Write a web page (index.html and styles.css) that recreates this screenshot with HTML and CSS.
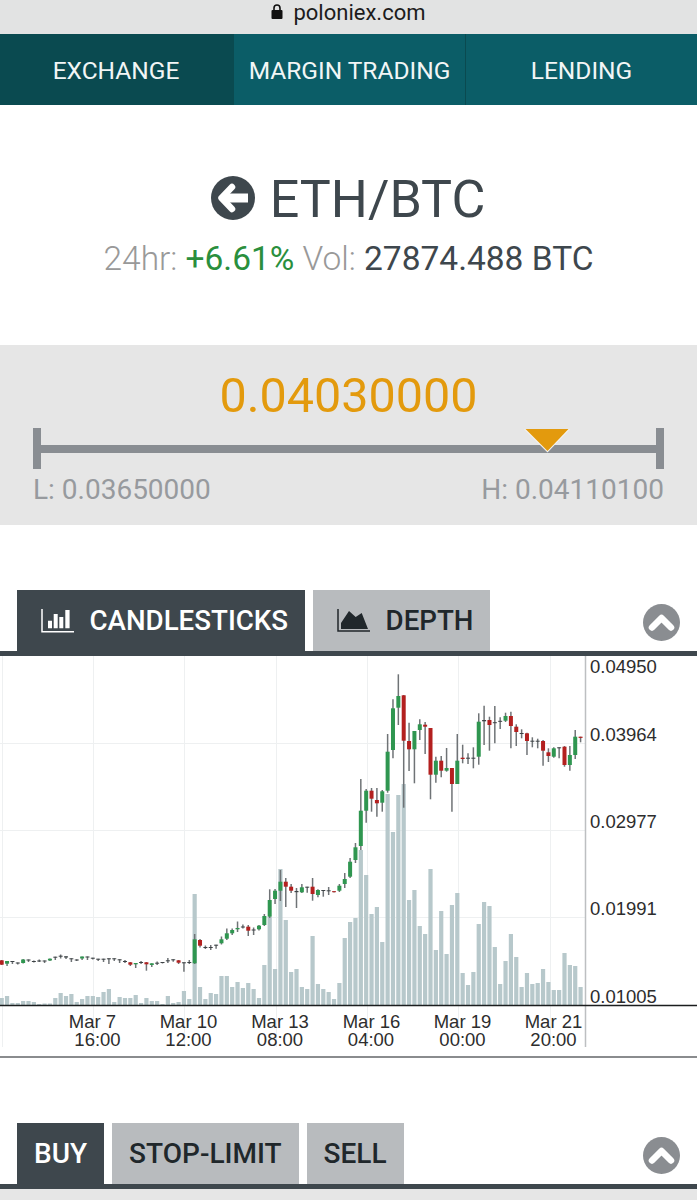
FILE: index.html
```html
<!DOCTYPE html>
<html lang="en">
<head>
<meta charset="utf-8">
<title>ETH/BTC - Poloniex</title>
<link rel="stylesheet" href="styles.css">
</head>
<body>
<div class="urlbar">
  <svg class="lock" viewBox="0 0 12 15" width="12" height="15"><path d="M3 6V4a3 3 0 0 1 6 0v2" fill="none" stroke="#111" stroke-width="1.6"/><rect x="0.5" y="6" width="11" height="9" rx="1" fill="#111"/></svg>
  <span class="url">poloniex.com</span>
</div>
<nav class="nav">
  <a class="nav-item nav-active">EXCHANGE</a>
  <a class="nav-item nav-mid">MARGIN TRADING</a>
  <a class="nav-item">LENDING</a>
</nav>
<header class="pair">
  <div class="pair-title">
    <svg class="back" viewBox="0 0 44 44" width="44" height="44"><circle cx="22" cy="22" r="22" fill="#3e474d"/><path d="M21 11 10.500 22 21 33" fill="none" stroke="#fff" stroke-width="6.500" stroke-linejoin="round" stroke-linecap="round"/><path d="M14 22H37" stroke="#fff" stroke-width="9"/></svg>
    <h1 class="pair-name">ETH/BTC</h1>
  </div>
  <p class="pair-stats"><span class="muted">24hr:</span> <span class="up">+6.61%</span> <span class="muted">Vol:</span> <span class="dark">27874.488 BTC</span></p>
</header>
<section class="range">
  <div class="price">0.04030000</div>
  <div class="slider">
    <i class="cap"></i><i class="track"></i><i class="cap"></i>
    <svg class="marker" viewBox="0 0 46 25" width="46" height="25"><path d="M0 1H46L23.500 24.500Z" fill="#f4f4f4"/><path d="M1.500 1H44.500L23.500 23Z" fill="#e39a0d"/></svg>
  </div>
  <div class="limits"><span>L: 0.03650000</span><span>H: 0.04110100</span></div>
</section>
<section class="panel chart-panel">
  <div class="tabs">
    <div class="tab tab-on">
      <svg class="tab-icon" viewBox="0 0 33 25" width="33" height="25"><path d="M1 1V23.700H33" fill="none" stroke="#fff" stroke-width="1.500"/><path d="M7 12.700h4v7.600H7zM12.700 6h4v14.300h-4zM18.300 9h4v11.300h-4zM24.300 2h4.300v18.300h-4.300z" fill="#fff"/></svg>
      CANDLESTICKS
    </div>
    <div class="tab">
      <svg class="tab-icon" viewBox="0 0 33 25" width="33" height="25"><path d="M1 1V23H33" fill="none" stroke="#20272b" stroke-width="1.500"/><path d="M4 21V15L12 3 18.700 9 24.700 5 31 21Z" fill="#20272b"/></svg>
      DEPTH
    </div>
    <svg class="collapse" viewBox="0 0 37 37" width="37" height="37"><circle cx="18.500" cy="18.500" r="18.500" fill="#8a8d91"/><path d="M9 23.500 18.500 14 28 23.500" fill="none" stroke="#fff" stroke-width="6.500" stroke-linejoin="round" stroke-linecap="round"/></svg>
  </div>
  <div class="rule"></div>
  <svg id="chart" class="chart" viewBox="0 656 697 400" width="697" height="400">
    <g id="grid"></g>
    <g id="bars"></g>
    <g id="candles"></g>
    <path class="axis" d="M585.500 656V1047"/>
    <path class="base" d="M0 1005.500H697"/>
    <g class="labels">
      <text x="590" y="673">0.04950</text>
      <text x="590" y="741">0.03964</text>
      <text x="590" y="828">0.02977</text>
      <text x="590" y="915">0.01991</text>
      <text x="590" y="1003">0.01005</text>
    </g>
    <g class="labels mid">
      <text x="92.500" y="1028">Mar 7</text><text x="97.500" y="1046">16:00</text>
      <text x="188.500" y="1028">Mar 10</text><text x="188.500" y="1046">12:00</text>
      <text x="280" y="1028">Mar 13</text><text x="280" y="1046">08:00</text>
      <text x="371.500" y="1028">Mar 16</text><text x="371" y="1046">04:00</text>
      <text x="462.500" y="1028">Mar 19</text><text x="462.500" y="1046">00:00</text>
      <text x="553.500" y="1028">Mar 21</text><text x="553.500" y="1046">20:00</text>
    </g>
  </svg>
</section>
<section class="panel order-panel">
  <div class="tabs tabs-order">
    <div class="tab tab-on">BUY</div>
    <div class="tab">STOP-LIMIT</div>
    <div class="tab">SELL</div>
    <svg class="collapse" viewBox="0 0 37 37" width="37" height="37"><circle cx="18.500" cy="18.500" r="18.500" fill="#8a8d91"/><path d="M9 23.500 18.500 14 28 23.500" fill="none" stroke="#fff" stroke-width="6.500" stroke-linejoin="round" stroke-linecap="round"/></svg>
  </div>
  <div class="rule"></div>
  <div class="order-body"></div>
</section>
<script src="chart.js"></script>
</body>
</html>
```
FILE: styles.css
```css
* { box-sizing: border-box; }
html, body { margin: 0; padding: 0; background: #fff; }
body { width: 697px; height: 1200px; overflow: hidden; font-family: Roboto, "Liberation Sans", sans-serif; color: #3e474d; }

.urlbar { height: 34px; background: #e2e3e3; display: flex; justify-content: center; align-items: flex-start; gap: 10px; }
.lock { margin-top: 4px; }
.url { font-family: Roboto, sans-serif; font-size: 22px; line-height: 26px; color: #1c1c1c; }

.nav { height: 71px; display: grid; grid-template-columns: 234px 232px 231px; background: #0b5d67; }
.nav-item { display: flex; align-items: center; justify-content: center; color: #f2f6f6; font-size: 24.500px; font-weight: 400; padding-top: 1px; }
.nav-active { background: #0a4a50; padding-right: 2px; }
.nav-mid { border-right: 1px solid #0a4a50; }

.pair { height: 240px; padding-top: 71px; text-align: center; }
.pair-title { display: flex; justify-content: center; align-items: center; gap: 15px; height: 44px; padding-right: 1px; }
.pair-name { margin: 0; font-size: 52px; font-weight: 400; line-height: 44px; color: #3e474d; position: relative; top: 2px; }
.pair-stats { margin: 19px 0 0; font-size: 33.500px; font-weight: 300; line-height: 40px; }
.muted { color: #999; }
.up { color: #2a8f3d; font-weight: 400; }
.dark { color: #3e474d; font-weight: 400; }

.range { height: 180px; background: #e6e6e6; padding: 24px 33px 0; }
.price { font-size: 48.500px; font-weight: 400; line-height: 54px; color: #e39a0d; text-align: center; }
.slider { position: relative; display: flex; align-items: center; height: 41px; margin: 5px 0 0; }
.cap { width: 8px; height: 41px; background: #898d92; }
.track { flex: 1; height: 8px; background: #898d92; }
.marker { position: absolute; left: 491px; top: 0; }
.limits { display: flex; justify-content: space-between; margin-top: 3px; font-size: 28px; font-weight: 400; line-height: 36px; color: #979a9e; }

.chart-panel { padding-top: 65px; height: 533px; }
.tabs { position: relative; display: flex; gap: 8px; height: 61px; padding-left: 17px; }
.tab { display: flex; align-items: center; gap: 15.500px; height: 61px; padding: 0 17px; background: #b8bbbe; color: #20272b; font-size: 27.700px; font-weight: 500; }
.tab-on { background: #3e474d; color: #fff; }
.tab-icon { margin-left: 7px; }
.collapse { position: absolute; right: 17px; top: 14px; }
.rule { height: 5px; background: #3e474d; }

.chart { display: block; }
.chart-panel { border-bottom: 2px solid #8a8c8e; }
.gridline { stroke: #eef0f1; stroke-width: 1; }
.bar { fill: #b7c8cb; }
.wick { stroke: #6f7376; stroke-width: 1.500; }
.body-g { fill: #2f9650; }
.body-r { fill: #b3201f; }
.body-n { fill: #3d4245; }
.axis { stroke: #bdbfc1; stroke-width: 1.500; fill: none; }
.base { stroke: #1b1d1e; stroke-width: 1.500; fill: none; }
.labels text { font-family: "Liberation Sans", Arial, sans-serif; font-size: 18.500px; fill: #2d2d2d; }
.labels.mid text { text-anchor: middle; }

.order-panel { padding-top: 65px; }
.tabs-order .tab { gap: 0; font-size: 28px; }
.order-body { height: 11px; background: #e6e6e6; }
```
FILE: chart.js
```js
var NS = 'http://www.w3.org/2000/svg';
function add(parent, tag, cls, attrs) {
  var el = document.createElementNS(NS, tag);
  el.setAttribute('class', cls);
  for (var k in attrs) el.setAttribute(k, attrs[k]);
  document.getElementById(parent).appendChild(el);
}
var X0 = 1.7, STEP = 5.36, BASE = 1005;
var volumes = [7,9,2,2,4,4,3,1,1.5,1.5,7,12,9,11,3,6,9,9,8,13,16,3,8,7,7,10,2,7,4,4,1,9,2,3,14,6,111,18,6,12,11,29,29,18,23,17,22,16,7,40,88,36,136,85,33,36,18,16,69,21,16,13,6,22,67,83,87,155,130,91,98,63,211,173,210,221,105,115,79,71,136,55,94,51,100,112,32,20,33,81,103,99,58,21,44,71,48,18,32,21,22,36,23,15,15,52,40,39,18];
// wick top, body top, body bottom, wick bottom, kind
var candles = [
[960,960.3,964.7,965,'r'],[961,961,963.7,966,'g'],[961,961,962,964,'n'],[962.5,962.5,963.5,964.5,'n'],[959,959.5,963,963.5,'g'],[959.5,959.5,960.5,962,'n'],[960.5,961,962,962.5,'n'],[959.5,960.5,961.5,962,'n'],[960.5,960.5,961.5,963,'n'],[958.5,958.7,960.5,961,'g'],
[956.7,956.7,957.7,960,'n'],[954.5,955.7,956.7,958.5,'n'],[956.3,956.3,957.5,959,'n'],[958.3,958.3,959.3,962,'n'],[959.3,959.5,960.5,961,'n'],[956.5,956.5,958.5,960,'g'],[956.5,956.5,957.5,960,'n'],[957.7,957.7,958.7,959.5,'n'],[958.7,958.7,959.7,961,'n'],[958.7,958.7,959.7,962,'n'],
[958.3,958.3,959.3,964,'n'],[958.3,958.3,959.3,961,'n'],[959.3,959.3,960.3,963,'n'],[960,961,962,963,'n'],[962,962.3,964.7,966,'r'],[963,963,964.3,968,'g'],[961,962,963,964,'n'],[962,962.3,964.3,970.7,'r'],[963.3,963.3,965,967,'g'],[961.5,962.7,963.7,965,'n'],
[962,962,963,963.5,'n'],[958,960.3,961.3,963,'n'],[959.3,959.3,960.3,961.7,'n'],[960,960.3,962.7,964,'r'],[962.3,962.3,963.3,971.7,'n'],[960,962,963,964,'n'],
[934,939.3,963.3,964,'g'],[939,940,945.7,947.5,'r'],[945.5,947,948,949,'n'],[945,947,948,950,'n'],[944.7,944.7,945.7,948.7,'n'],[936.5,939.3,943.3,944.5,'g'],[928.5,933.3,938.7,940,'g'],[928.5,930,933.3,935,'g'],[921.5,928,929.3,932,'g'],[924.5,926.5,927.5,928.5,'n'],
[925,926.7,930.7,936,'r'],[927.5,929.5,930.5,935,'n'],[925,925.7,929.3,930.5,'g'],[914,916,925,926,'g'],[889.3,900,916.7,918,'g'],[889,890.7,899,904,'g'],[870,881.7,890.7,901,'g'],[878,881.7,886.7,907,'r'],[884,886.7,890.7,893,'r'],[888,891,892.2,908,'n'],
[884,887.3,892.3,893,'g'],[886.7,886.7,887.7,892.7,'n'],[878,886.7,894,900.7,'r'],[889.3,890,895,897.3,'g'],[890,890,891,896.7,'n'],[887,890.3,891.3,895,'n'],[891,891.2,892.2,892.5,'r'],[884,885.7,890.7,892,'g'],[873,879,884,888,'g'],[858,861.7,876.7,878,'g'],
[843,847.3,860,863,'g'],[779,810.7,846,850,'g'],[789,790.7,810.7,822.7,'g'],[788,790.7,798.7,811.7,'r'],[788,800,803.3,816.7,'r'],[790,791.3,802.7,811.7,'g'],[734,751.7,790.7,792.7,'g'],[699.3,708.3,750,758.3,'g'],[674.3,696,707.7,725,'g'],[695,695.3,740.7,807.7,'r'],
[722.7,741,749.3,771,'r'],[731,731,749.3,783.3,'g'],[719.3,724.3,730,740,'g'],[722,724.7,726.7,754,'r'],[728,728,774.7,799.3,'r'],[756.7,760.7,774.7,782.7,'g'],[756,760.7,770.7,777.3,'r'],[748,768,770.7,771.7,'g'],[768,768,784,811.7,'r'],[734,760.7,784,784,'g'],
[744.7,757.7,759,763.3,'r'],[753.3,757.7,758.7,764,'n'],[747.3,757.7,758.7,768.3,'n'],[713.3,721.7,756.7,764.7,'g'],[705.7,720,721.3,745,'n'],[716.7,720,725,750.7,'r'],[706,722.2,723.2,743.3,'n'],[717.3,720.8,721.8,729,'n'],[712.7,716,720.7,722,'g'],[711.7,716,726,748.3,'r'],
[724.3,726.7,732,746,'r'],[729.3,733,734,738.3,'n'],[732.7,733.3,741,755,'r'],[737.3,740.7,741.7,747.3,'n'],[738.7,740.7,741.7,748.3,'n'],[740,741,750.7,765.7,'r'],[748.3,752.3,756,762,'r'],[747.3,748.3,756.7,757.7,'g'],[747.3,747.3,748.3,758.3,'n'],[746,746.7,765,766.7,'r'],
[746,755,765,770.7,'g'],[730,736.7,755,759,'g'],[736.7,736.7,737.9,742.3,'r']
];
[743.5,830.5,917.5].forEach(function (y) {
  add('grid', 'line', 'gridline', {x1: 0, x2: 585, y1: y, y2: y});
});
[2.5,93.5,184.5,276.5,367.5,458.5,550.5].forEach(function (x) {
  add('grid', 'line', 'gridline', {x1: x, x2: x, y1: 656, y2: 1047});
});
volumes.forEach(function (h, i) {
  add('bars', 'rect', 'bar', {x: (X0 + i * STEP - 2.1).toFixed(2), y: BASE - h, width: 4.2, height: h});
});
candles.forEach(function (c, i) {
  var x = X0 + i * STEP;
  add('candles', 'line', 'wick', {x1: x.toFixed(2), x2: x.toFixed(2), y1: c[0], y2: c[3]});
  add('candles', 'rect', 'body-' + c[4], {x: (x - 2).toFixed(2), y: c[1], width: 4, height: (c[2] - c[1]).toFixed(2)});
});
```
